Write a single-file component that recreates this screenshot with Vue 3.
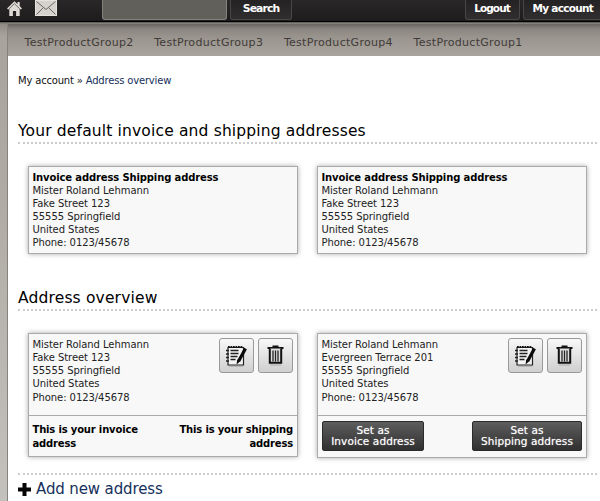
<script setup>
const groups = ['TestProductGroup2', 'TestProductGroup3', 'TestProductGroup4', 'TestProductGroup1']
const defaults = [1, 2]
const lines = ['Mister Roland Lehmann', 'Fake Street 123', '55555 Springfield', 'United States', 'Phone: 0123/45678']
const addresses = [
  { id: 1, lines, isDefault: true },
  { id: 2, lines: lines.map((l, i) => (i === 1 ? 'Evergreen Terrace 201' : l)), isDefault: false }
]
</script>

<template>
  <div class="page">
    <header class="topbar">
      <svg class="home" width="17" height="17" viewBox="0 0 17 17">
        <path d="M8.4 1.2 1 8.4l1.2 1.2L3.3 8.700V16h3.600v-5h3.200v5h3.600V8.700l1.100.9L16 8.400l-2.300-2.300V2h-2.200v2z" fill="#dedbd6" />
        <path d="m3 8.800 5.400-5.100 5.400 5.100" fill="none" stroke="#55514d" stroke-width=".8" />
      </svg>
      <svg class="mail" width="23" height="16" viewBox="0 0 23 16">
        <rect x=".5" y=".5" width="21" height="15" fill="#d5d1cc" stroke="#e5e2de" />
        <path d="m1.500 1.500 9.500 8 9.500-8M1.500 14.500l7-7M20.500 14.500l-7-7" fill="none" stroke="#6b6661" stroke-width="1" />
      </svg>
      <div class="field"></div>
      <div class="tab search"><span>Search</span></div>
      <div class="tab logout"><span>Logout</span></div>
      <div class="tab account"><span>My account</span></div>
    </header>
    <div class="body">
      <div class="gutter"></div>
      <div class="main">
        <nav class="nav"><span v-for="g in groups" :key="g">{{ g }}</span></nav>
        <div class="crumbs"><span>My account » </span><a>Address overview</a></div>
        <h2 class="h-default"><span>Your default invoice and shipping addresses</span></h2>
        <div class="row row-default">
          <div v-for="d in defaults" :key="d" class="card">
            <div class="bold">Invoice address Shipping address</div>
            <div v-for="l in lines" :key="l" class="line">{{ l }}</div>
          </div>
        </div>
        <h2 class="h-overview"><span>Address overview</span></h2>
        <div class="row row-overview">
          <div v-for="a in addresses" :key="a.id" class="card tall" :class="{ short: a.isDefault }">
            <div class="top">
              <div>
                <div v-for="l in a.lines" :key="l" class="line">{{ l }}</div>
              </div>
              <div class="icons">
                <div class="ibtn">
                  <svg width="23" height="24" viewBox="0 0 23 24">
                    <path d="M3 3.500h15.500V21H3z" fill="#f3f3f3" stroke="#222" stroke-width="1.200" />
                    <path d="M3 2.800h14.500" stroke="#111" stroke-width="1.800" stroke-dasharray="1.800 .7" />
                    <path d="M1 6.500h3M1 10h3M1 13.500h3M1 17h3M5.500 6.500h8M5.500 9.500h8M5.500 12.500h7M5.500 15.500h5" stroke="#222" stroke-width="1.300" />
                    <path d="m20.500 4.500-6.800 12.500" stroke="#0a0a0a" stroke-width="3.200" />
                    <path d="m12.200 15.500-.6 5 3.800-3.500z" fill="#0a0a0a" />
                    <path d="M4 22.500h14" stroke="#b5b5b5" />
                  </svg>
                </div>
                <div class="ibtn">
                  <svg width="17" height="21" viewBox="0 0 17 21">
                    <path d="M.5 3h16M5.500 1.300h6" stroke="#111" stroke-width="1.800" />
                    <path d="M2.800 3.500v14.300h11.400V3.500" fill="#ddd" stroke="#111" stroke-width="2" />
                    <path d="M6 5.500v11M8.500 5.500v11M11 5.500v11" stroke="#222" stroke-width="1.300" />
                    <path d="M3 20h11" stroke="#aaa" />
                  </svg>
                </div>
              </div>
            </div>
            <div v-if="a.isDefault" class="bottom notes">
              <div>This is your invoice<br>address</div>
              <div class="right">This is your shipping<br>address</div>
            </div>
            <div v-else class="bottom">
              <div class="dark inv"><span>Set as<br>Invoice address</span></div>
              <div class="dark ship"><span>Set as<br>Shipping address</span></div>
            </div>
          </div>
        </div>
        <div class="add">
          <svg width="13" height="13" viewBox="0 0 13 13"><path d="M6.500 0v13M0 6.500h13" stroke="#050505" stroke-width="4" /></svg>
          <a>Add new address</a>
        </div>
      </div>
    </div>
  </div>
</template>

<style>
body { margin: 0; overflow: hidden; }
</style>
<style scoped>
* { box-sizing: border-box; }
.page { width: 600px; height: 501px; overflow: hidden; background: #fff; font-family: "DejaVu Sans", Verdana, sans-serif; font-size: 10px; color: #222; white-space: nowrap; }
.topbar { height: 24px; display: flex; align-items: flex-start; padding-left: 6px; overflow: hidden; background: linear-gradient(#292727 0, #1e1c1d 20px, #1c1a1b 21px, #000 21px, #000 22px, #4c4946 22px, #7d7975 23px, #8a8681 24px); }
svg { display: block; flex: none; }
.mail { margin-left: 12px; }
.field { flex: none; width: 125px; height: 20px; margin-left: 44px; background: #62605b; border: 1px solid #85827d; border-top: 0; border-radius: 0 0 3px 3px; }
.tab { flex: none; height: 20px; border: 1px solid #484746; border-top: 0; border-radius: 0 0 3px 3px; background: linear-gradient(#242223, #302e2e); color: #fff; font-weight: bold; text-align: center; }
.search { width: 62px; margin-left: 3px; font-size: 10.800px; line-height: 18px; letter-spacing: -.9px; }
.logout { width: 55px; margin-left: 172.500px; font-size: 10.500px; line-height: 17px; letter-spacing: -.9px; }
.account { width: 84px; margin-left: 3.500px; padding-left: 8.500px; text-align: left; font-size: 10.500px; line-height: 17px; letter-spacing: -.7px; }
.body { display: flex; height: 477px; }
.gutter { width: 8px; flex: none; border-right: 1px solid #87827c; background: linear-gradient(#8f8a84 0, #a8a39c 12px, #b0aca5 180px, #c3c1bd 477px); }
.main { flex: 1; min-width: 0; }
.nav { height: 32px; display: flex; gap: 20.500px; padding: 0 0 0 16.500px; line-height: 37px; font-size: 11px; color: #403b38; background: linear-gradient(#69645f 0, #8c8680 5px, #9b958f 14px, #aaa49e 32px); }
.nav span { width: 109.200px; letter-spacing: .3px; }
.crumbs { height: 62px; padding: 18px 0 0 10px; line-height: 13px; letter-spacing: -.18px; white-space: pre; color: #111; }
a { color: #16305c; }
h2 { margin: 0 3px 0 10px; font-weight: normal; color: #000; font-size: 15.500px; letter-spacing: .16px; line-height: 20px; border-bottom: 2px dotted #ccc; }
.h-default { height: 26px; padding-top: 3px; }
.h-overview { height: 26px; padding-top: 3px; margin-top: 31px; }
.row { display: flex; align-items: flex-start; gap: 19px; padding: 22px 0 0 20px; }
.card { width: 270px; height: 88px; padding: 3.500px 3.500px; border: 1px solid #aaa; background: #f8f8f8; box-shadow: 0 0 5px #aaa; }
.line, .bold { line-height: 13.150px; letter-spacing: -.06px; }
.bold { font-weight: bold; color: #000; letter-spacing: -.13px; }
.tall { height: 125px; padding: 0; }
.short { height: 124px; }
.top { height: 82px; display: flex; justify-content: space-between; padding: 4px 4.500px 4px 3.500px; border-bottom: 1px solid #aaa; }
.icons { display: flex; gap: 3.500px; }
.ibtn { width: 35px; height: 35px; border: 1px solid #999; border-radius: 3px; background: linear-gradient(#f8f8f8, #cfcfcf); display: flex; align-items: center; justify-content: center; }
.bottom { display: flex; justify-content: space-between; padding: 5px 4px; color: #fff; }
.notes { padding: 7px 4px 7px 3.500px; font-weight: bold; line-height: 14px; letter-spacing: -.17px; color: #000; }
.right { text-align: right; }
.dark { height: 30px; padding-top: 3px; border: 1px solid #2b2b2b; border-radius: 2px; background: linear-gradient(#5d5d5d, #303030); text-align: center; line-height: 10.500px; font-size: 10.500px; letter-spacing: .1px; text-shadow: 0 0 1px rgba(255, 255, 255, .6); }
.inv { width: 102px; }
.ship { width: 110px; }
.add { margin: 15px 3px 0 10px; border-top: 2px dotted #ccc; padding-top: 4px; display: flex; align-items: center; gap: 5px; font-size: 15px; letter-spacing: -.12px; line-height: 20px; }
</style>
